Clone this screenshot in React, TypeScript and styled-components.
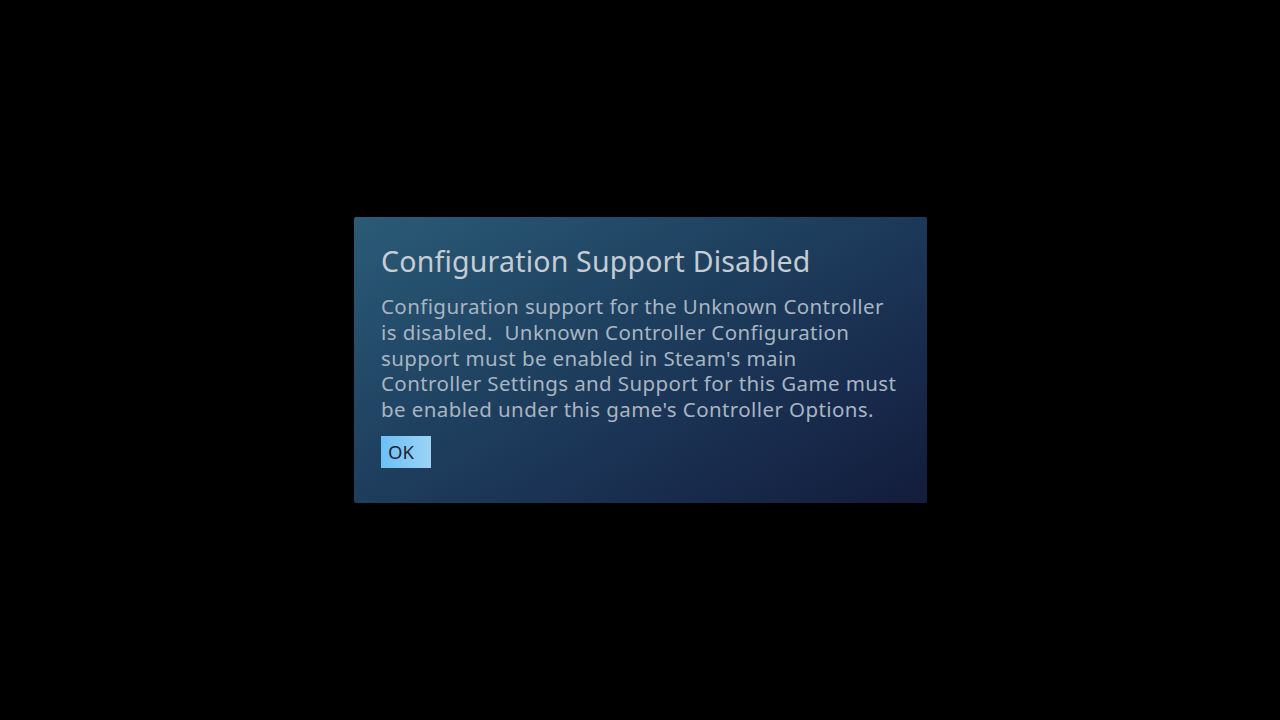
import React from 'react'
import { styled, createGlobalStyle } from 'styled-components'

const GlobalStyle = createGlobalStyle`
    html, body {
        margin: 0;
        padding: 0;
        background: #000;
        height: 100%;
    }
    #root {
        height: 100%;
    }
`;

const Screen = styled.div`
    width: 1280px;
    height: 720px;
    display: flex;
    align-items: center;
    justify-content: center;
    background: #000;
    font-family: "Noto Sans", "DejaVu Sans", sans-serif;
`;

const Dialog = styled.div`
    box-sizing: border-box;
    width: 573px;
    height: 286px;
    margin-left: 1px;
    padding: 25px 27px 0 27px;
    border-radius: 2px;
    background: linear-gradient(150deg, #2a5b77 0%, #1f4160 40%, #182b4d 75%, #131c3b 100%);
    display: flex;
    flex-direction: column;
    align-items: flex-start;
`;

const Title = styled.h1`
    margin: 0;
    font-size: 28.5px;
    font-weight: 400;
    letter-spacing: 0.2px;
    line-height: 38px;
    color: #c5ccd3;
`;

const Message = styled.p`
    margin: 14px 0 0 0;
    font-size: 20.5px;
    letter-spacing: 0.4px;
    line-height: 25.8px;
    color: #a8b5c2;
    white-space: pre-wrap;
    width: 530px;
`;

const OkButton = styled.button`
    margin-top: 13px;
    width: 50px;
    height: 32px;
    border: none;
    border-radius: 0;
    padding: 0 0 0 7px;
    text-align: left;
    font-family: inherit;
    font-size: 18.5px;
    color: #1c2533;
    background: linear-gradient(90deg, #6cc0f6 0%, #9bd3f5 100%);
    cursor: pointer;
`;

const App = () => {
    return (
        <Screen>
            <GlobalStyle />
            <Dialog>
                <Title>Configuration Support Disabled</Title>
                <Message>
                    {"Configuration support for the Unknown Controller\nis disabled.  Unknown Controller Configuration\nsupport must be enabled in Steam's main\nController Settings and Support for this Game must\nbe enabled under this game's Controller Options."}
                </Message>
                <OkButton>OK</OkButton>
            </Dialog>
        </Screen>
    )
}

export default App;
